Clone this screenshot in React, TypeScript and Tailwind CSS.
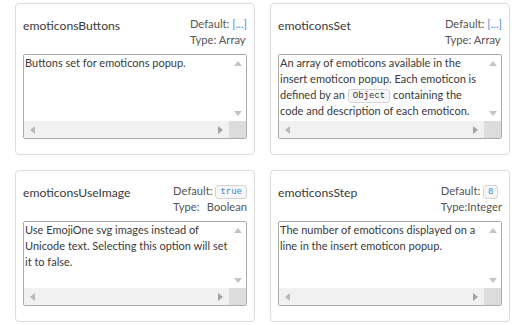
import React from 'react';

type Opt = {
  name: string;
  def: React.ReactNode;
  type: React.ReactNode;
  desc: React.ReactNode;
};

const Code = ({ children, blue }: { children: React.ReactNode; blue?: boolean }) => (
  <code
    className={
      'inline-block rounded-[3px] border border-[#d4d4d4] bg-[#f7f7f7] px-[4px] align-middle text-[9px] leading-[12px] font-["Liberation_Mono",monospace] ' +
      (blue ? 'text-[#2e8bdc]' : 'text-[#333]')
    }
  >
    {children}
  </code>
);

const options: Opt[] = [
  {
    name: 'emoticonsButtons',
    def: <span className="text-[#3d8fe0]">[...]</span>,
    type: <span>Type: Array</span>,
    desc: 'Buttons set for emoticons popup.',
  },
  {
    name: 'emoticonsSet',
    def: <span className="text-[#3d8fe0]">[...]</span>,
    type: <span>Type: Array</span>,
    desc: (
      <>
        An array of emoticons available in the insert emoticon popup. Each emoticon is defined by an{' '}
        <Code>Object</Code> containing the code and description of each emoticon.
      </>
    ),
  },
  {
    name: 'emoticonsUseImage',
    def: <Code blue>true</Code>,
    type: (
      <span className="flex justify-between">
        <span>Type:</span>
        <span>Boolean</span>
      </span>
    ),
    desc: 'Use EmojiOne svg images instead of Unicode text. Selecting this option will set it to false.',
  },
  {
    name: 'emoticonsStep',
    def: <Code blue>8</Code>,
    type: <span>Type:Integer</span>,
    desc: 'The number of emoticons displayed on a line in the insert emoticon popup.',
  },
];

// fake classic scrollbars on the description box
const ScrollBox = ({ children }: { children: React.ReactNode }) => (
  <div className="relative h-[85px] w-[224px] overflow-hidden rounded-[2px] border border-[#ababab] bg-white">
    <div className="h-[67px] w-[207px] overflow-hidden pl-[1px] text-[11px] leading-[16px] text-[#3a3a3a]">
      {children}
    </div>
    <div className="absolute right-0 top-0 flex h-[67px] w-[17px] flex-col items-center justify-between bg-white py-[6px]">
      <svg width="8" height="5" viewBox="0 0 8 5">
        <path d="M0 5 L4 0 L8 5 Z" fill="#c4c4c4" />
      </svg>
      <svg width="8" height="5" viewBox="0 0 8 5">
        <path d="M0 0 L4 5 L8 0 Z" fill="#c4c4c4" />
      </svg>
    </div>
    <div className="absolute bottom-0 left-0 flex h-[17px] w-full">
      <div className="flex flex-1 items-center justify-between bg-[#f1f1f1] px-[6px]">
        <svg width="5" height="8" viewBox="0 0 5 8">
          <path d="M5 0 L0 4 L5 8 Z" fill="#b8b8b8" />
        </svg>
        <svg width="5" height="8" viewBox="0 0 5 8">
          <path d="M0 0 L5 4 L0 8 Z" fill="#a3a3a3" />
        </svg>
      </div>
      <div className="w-[17px] bg-[#dcdcdc]" />
    </div>
  </div>
);

const OptionCard = ({ opt }: { opt: Opt }) => (
  <div className="h-[152px] w-[240px] rounded-[4px] border border-[#dcdcdc] bg-white px-[7px]">
    <div className="flex h-[50px] items-start justify-between pt-[12px]">
      <div className="mt-[2px] text-[12.2px] leading-[16px] text-[#3a3a3a]">{opt.name}</div>
      <div className="w-fit text-[11.2px] leading-[16px] text-[#555]">
        <div>
          Default: {opt.def}
        </div>
        <div>{opt.type}</div>
      </div>
    </div>
    <ScrollBox>{opt.desc}</ScrollBox>
  </div>
);

export default function App() {
  return (
    <div className="min-h-[325px] bg-white pl-[15px] pt-[3px] font-['Lato',sans-serif]">
      <div className="grid w-fit grid-cols-[240px_240px] gap-x-[15px] gap-y-[15px]">
        {options.map((o) => (
          <OptionCard key={o.name} opt={o} />
        ))}
      </div>
    </div>
  );
}
